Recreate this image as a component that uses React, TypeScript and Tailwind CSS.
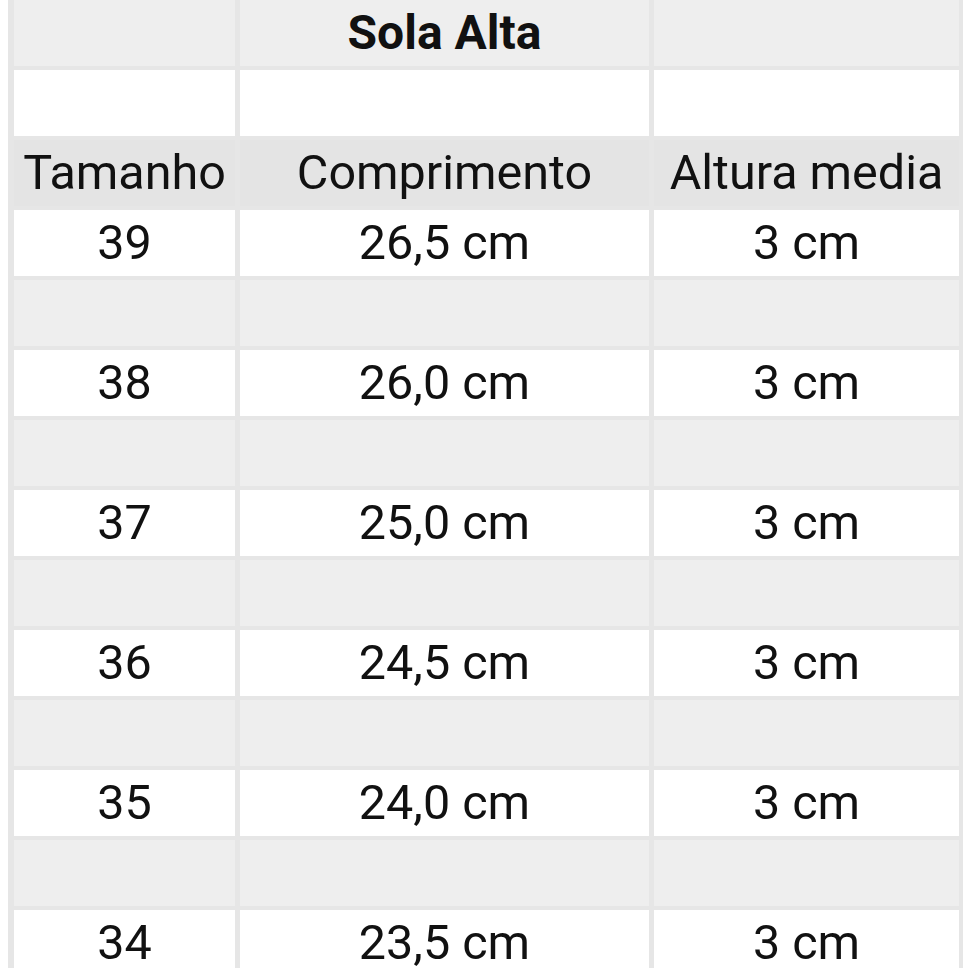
import React from "react";

const rows: [string, string, string][] = [
  ["39", "26,5 cm", "3 cm"],
  ["38", "26,0 cm", "3 cm"],
  ["37", "25,0 cm", "3 cm"],
  ["36", "24,5 cm", "3 cm"],
  ["35", "24,0 cm", "3 cm"],
  ["34", "23,5 cm", "3 cm"],
];

function Cell({ bg, children, bold }: { bg: string; children?: React.ReactNode; bold?: boolean }) {
  return (
    <div
      className={`${bg} h-[66px] flex items-center justify-center text-[#111111] whitespace-nowrap ${
        bold ? "font-bold text-[48px]" : "text-[48.5px]"
      }`}
    >
      {children}
    </div>
  );
}

export default function App() {
  const cells: React.ReactNode[] = [];
  cells.push(
    <Cell key="t1" bg="bg-[#eeeeee]" />,
    <Cell key="t2" bg="bg-[#eeeeee]" bold>
      Sola Alta
    </Cell>,
    <Cell key="t3" bg="bg-[#eeeeee]" />,
    <Cell key="b1" bg="bg-white" />,
    <Cell key="b2" bg="bg-white" />,
    <Cell key="b3" bg="bg-white" />,
    <Cell key="h1" bg="bg-[#e4e4e4]">Tamanho</Cell>,
    <Cell key="h2" bg="bg-[#e4e4e4]">Comprimento</Cell>,
    <Cell key="h3" bg="bg-[#e4e4e4]">Altura media</Cell>
  );
  rows.forEach((r, i) => {
    cells.push(
      <Cell key={`r${i}a`} bg="bg-white">{r[0]}</Cell>,
      <Cell key={`r${i}b`} bg="bg-white">{r[1]}</Cell>,
      <Cell key={`r${i}c`} bg="bg-white">{r[2]}</Cell>
    );
    if (i < rows.length - 1) {
      cells.push(
        <Cell key={`g${i}a`} bg="bg-[#eeeeee]" />,
        <Cell key={`g${i}b`} bg="bg-[#eeeeee]" />,
        <Cell key={`g${i}c`} bg="bg-[#eeeeee]" />
      );
    }
  });
  return (
    <div
      className="w-[968px] h-[968px] overflow-hidden bg-white pl-[8px]"
      style={{ fontFamily: "Roboto, 'Noto Sans', sans-serif" }}
    >
      <div className="w-[955px] bg-[#e6e6e6] pl-[6px] pr-[4px] pb-[4px] grid grid-cols-[221px_409px_305px] gap-x-[5px] gap-y-[4px]">
        {cells}
      </div>
    </div>
  );
}
